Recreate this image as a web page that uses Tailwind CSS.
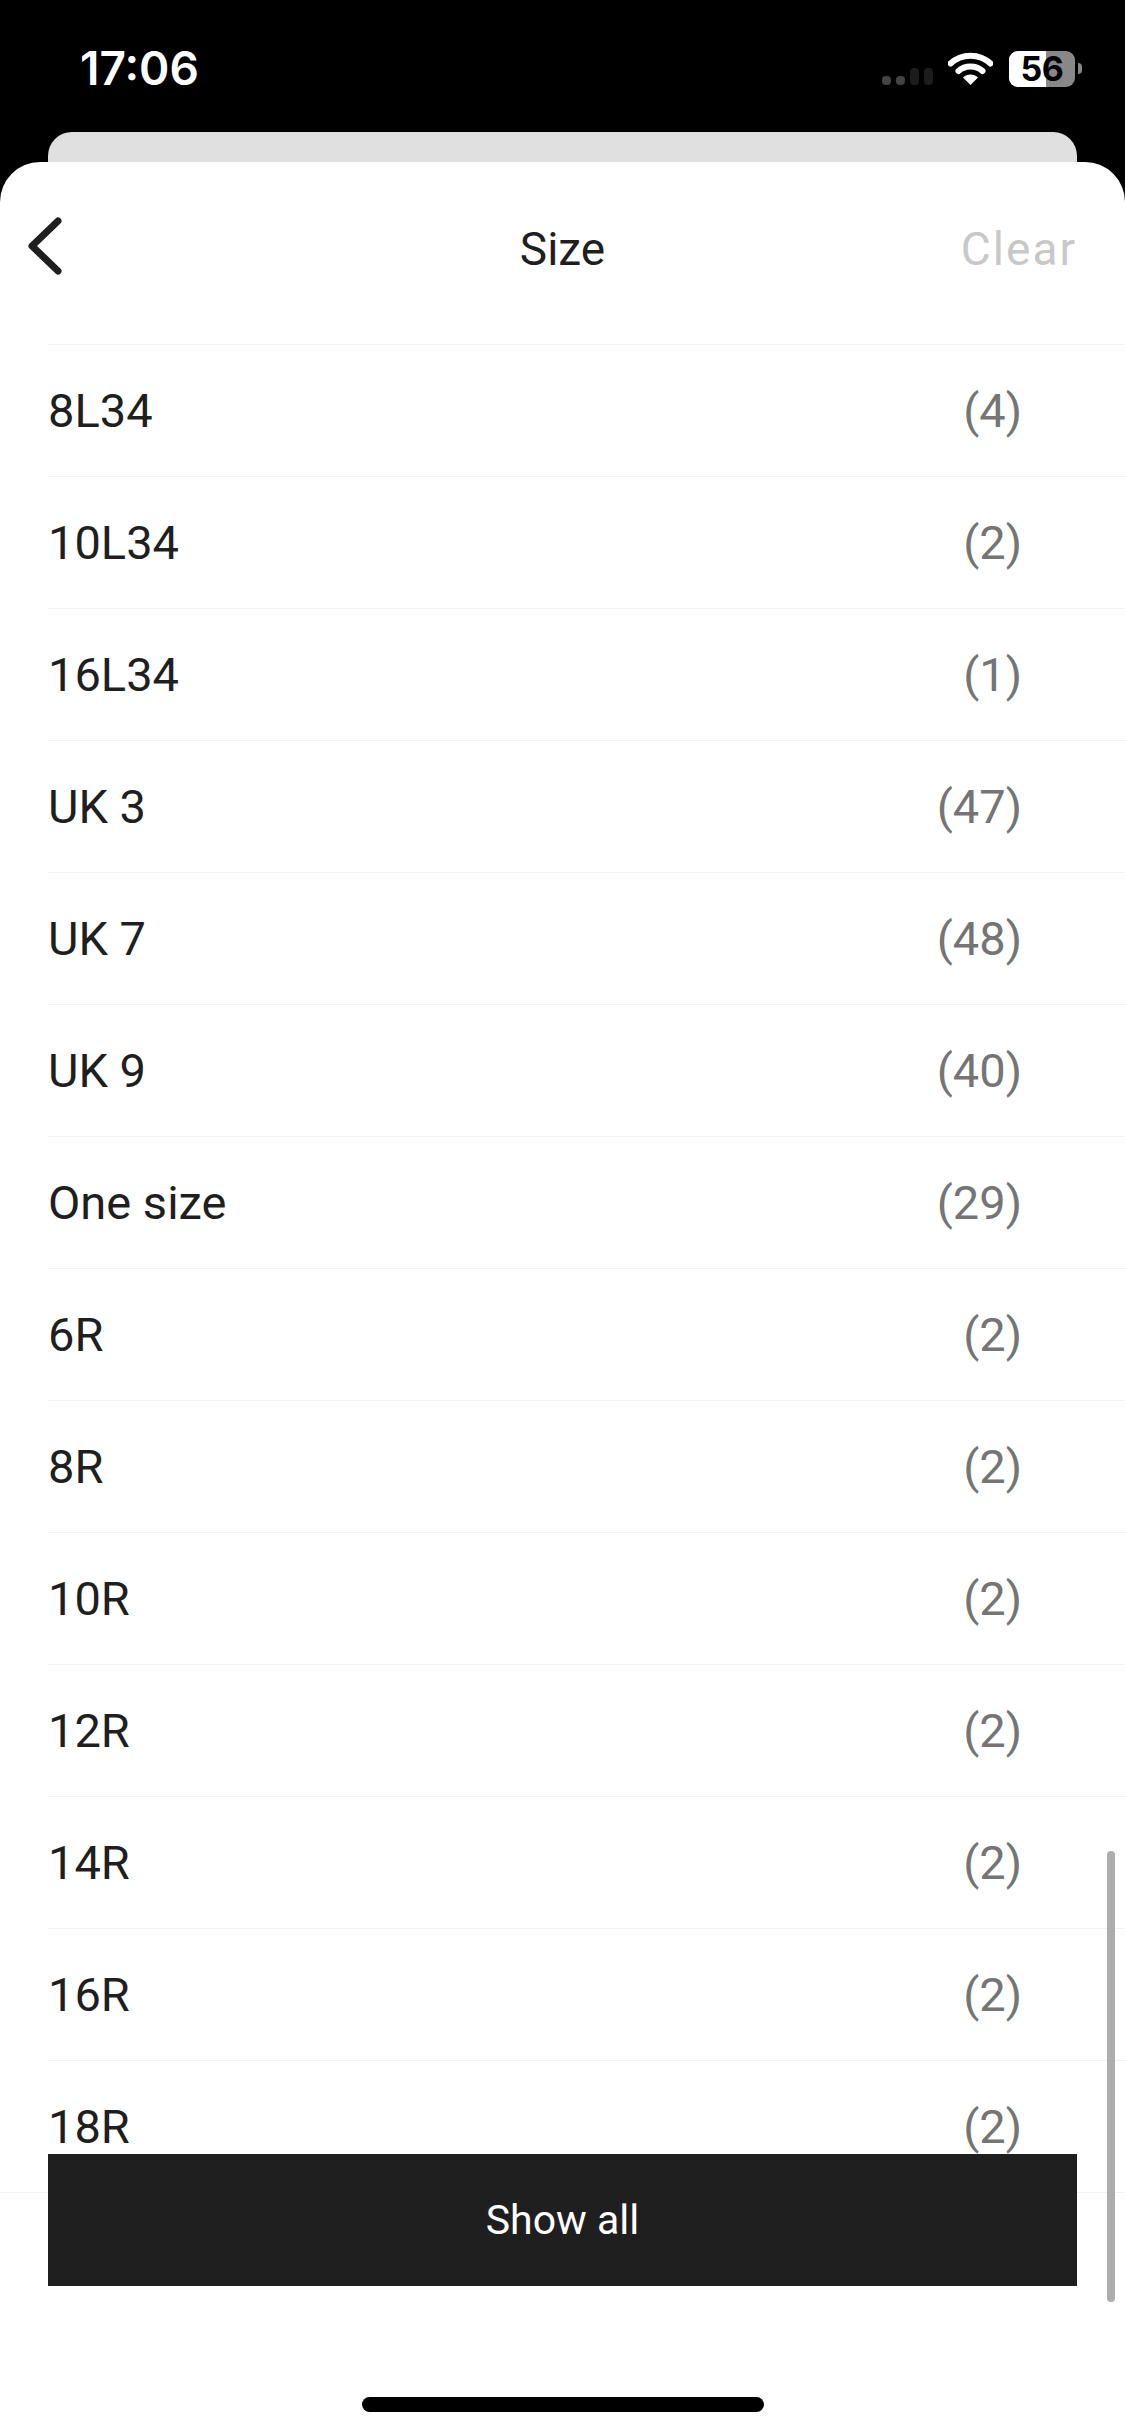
<!DOCTYPE html>
<html lang="en">
<head>
<meta charset="utf-8">
<title>Size</title>
<script src="https://cdn.jsdelivr.net/npm/@tailwindcss/browser@4"></script>
</head>
<body class="m-0 bg-black">
<div class="relative flex h-[2436px] w-[1125px] flex-col overflow-hidden bg-black font-['Roboto',sans-serif]">
  <!-- status bar -->
  <div class="relative flex h-[132px] shrink-0 items-start justify-between text-white">
    <span class="ml-[80px] mt-[44px] font-['Inter',sans-serif] text-[46px] leading-[48px] font-semibold">17:06</span>
    <div class="mt-[51px] mr-[43px] flex items-start">
      <div class="mt-[17px] mr-[15px] flex items-end gap-[5px]">
        <span class="h-[9px] w-[9px] rounded-[4px] bg-[#444]"></span>
        <span class="h-[9px] w-[9px] rounded-[4px] bg-[#444]"></span>
        <span class="h-[17px] w-[9px] rounded-[4px] bg-[#1c1c1c]"></span>
        <span class="h-[17px] w-[9px] rounded-[4px] bg-[#1c1c1c]"></span>
      </div>
      <svg class="mt-[1px] mr-[16px]" width="45" height="33" viewBox="0 0 45 33" fill="none">
        <path d="M2.500 11.500C13.500 1 31.500 1 42.500 11.500" stroke="#fff" stroke-width="6" stroke-linecap="round"/>
        <path d="M10.500 19C17 13 28 13 34.500 19" stroke="#fff" stroke-width="6" stroke-linecap="round"/>
        <path d="M22.500 33L15 25.500C19 21.500 26 21.500 30 25.500Z" fill="#fff"/>
      </svg>
      <div class="relative flex h-[36px] w-[66px] items-center justify-center rounded-[9px] bg-[#888]">
        <div class="absolute inset-y-0 left-0 w-[37px] rounded-l-[9px] bg-white"></div>
        <span class="relative font-['Inter',sans-serif] text-[34px] leading-[36px] font-bold tracking-[-0.5px] text-black">56</span>
      </div>
      <div class="mt-[12px] ml-[3px] h-[11px] w-[4px] rounded-r-[4px] bg-[#888]"></div>
    </div>
  </div>
  <!-- card behind sheet -->
  <div class="mx-[48px] h-[30px] shrink-0 rounded-t-[24px] bg-[#e0e0e0]"></div>
  <!-- sheet -->
  <div class="relative flex min-h-0 flex-1 flex-col overflow-hidden rounded-t-[40px] bg-white text-[#1f1f1f]">
    <header class="flex h-[182px] shrink-0 items-start justify-between">
      <svg class="mt-[53px] ml-[26px]" width="38" height="62" viewBox="0 0 38 62" fill="none">
        <path d="M32 6L6 31L32 56" stroke="#1f1f1f" stroke-width="7" stroke-linecap="round" stroke-linejoin="round"/>
      </svg>
      <span class="absolute left-0 right-0 top-[61px] text-center text-[46px] leading-[52px]">Size</span>
      <span class="mt-[61px] mr-[48px] text-[46px] leading-[52px] tracking-[2px] text-[#c8c8c8]">Clear</span>
    </header>
    <ul class="flex min-h-0 flex-col pl-[48px]">
      <li class="flex h-[132px] shrink-0 items-center justify-between border-t border-[#f2f2f2] pt-[2px] pr-[103px] text-[47px]"><span>8L34</span><span class="text-[#757575]">(4)</span></li>
      <li class="flex h-[132px] shrink-0 items-center justify-between border-t border-[#f2f2f2] pt-[2px] pr-[103px] text-[47px]"><span>10L34</span><span class="text-[#757575]">(2)</span></li>
      <li class="flex h-[132px] shrink-0 items-center justify-between border-t border-[#f2f2f2] pt-[2px] pr-[103px] text-[47px]"><span>16L34</span><span class="text-[#757575]">(1)</span></li>
      <li class="flex h-[132px] shrink-0 items-center justify-between border-t border-[#f2f2f2] pt-[2px] pr-[103px] text-[47px]"><span>UK 3</span><span class="text-[#757575]">(47)</span></li>
      <li class="flex h-[132px] shrink-0 items-center justify-between border-t border-[#f2f2f2] pt-[2px] pr-[103px] text-[47px]"><span>UK 7</span><span class="text-[#757575]">(48)</span></li>
      <li class="flex h-[132px] shrink-0 items-center justify-between border-t border-[#f2f2f2] pt-[2px] pr-[103px] text-[47px]"><span>UK 9</span><span class="text-[#757575]">(40)</span></li>
      <li class="flex h-[132px] shrink-0 items-center justify-between border-t border-[#f2f2f2] pt-[2px] pr-[103px] text-[47px]"><span>One size</span><span class="text-[#757575]">(29)</span></li>
      <li class="flex h-[132px] shrink-0 items-center justify-between border-t border-[#f2f2f2] pt-[2px] pr-[103px] text-[47px]"><span>6R</span><span class="text-[#757575]">(2)</span></li>
      <li class="flex h-[132px] shrink-0 items-center justify-between border-t border-[#f2f2f2] pt-[2px] pr-[103px] text-[47px]"><span>8R</span><span class="text-[#757575]">(2)</span></li>
      <li class="flex h-[132px] shrink-0 items-center justify-between border-t border-[#f2f2f2] pt-[2px] pr-[103px] text-[47px]"><span>10R</span><span class="text-[#757575]">(2)</span></li>
      <li class="flex h-[132px] shrink-0 items-center justify-between border-t border-[#f2f2f2] pt-[2px] pr-[103px] text-[47px]"><span>12R</span><span class="text-[#757575]">(2)</span></li>
      <li class="flex h-[132px] shrink-0 items-center justify-between border-t border-[#f2f2f2] pt-[2px] pr-[103px] text-[47px]"><span>14R</span><span class="text-[#757575]">(2)</span></li>
      <li class="flex h-[132px] shrink-0 items-center justify-between border-t border-[#f2f2f2] pt-[2px] pr-[103px] text-[47px]"><span>16R</span><span class="text-[#757575]">(2)</span></li>
      <li class="flex h-[132px] shrink-0 items-center justify-between border-t border-[#f2f2f2] pt-[2px] pr-[103px] text-[47px]"><span>18R</span><span class="text-[#757575]">(2)</span></li>
    </ul>
    <footer class="flex h-[244px] shrink-0 justify-center border-t border-[#f2f2f2] bg-white">
      <div class="mt-[204px] h-[15px] w-[402px] rounded-full bg-black"></div>
    </footer>
    <!-- floating button overlapping the list -->
    <button class="absolute top-[1992px] right-[48px] left-[48px] flex h-[132px] items-center justify-center bg-[#1f1f1f] pt-[2px] text-[41px] text-white">Show all</button>
    <!-- scrollbar -->
    <div class="absolute top-[1689px] right-[10px] h-[451px] w-[8px] rounded-full bg-[#adadad]"></div>
  </div>
</div>
</body>
</html>
